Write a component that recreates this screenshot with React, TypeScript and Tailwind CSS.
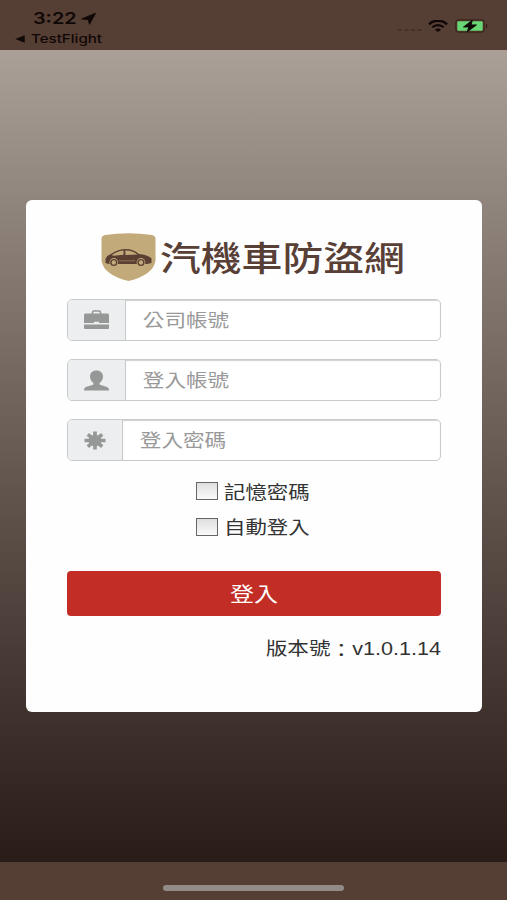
import type { ReactNode } from "react";

const cjk = "font-['Liberation_Sans','Noto_Sans_CJK_TC',sans-serif]";

function StatusBar() {
    return (
        <header className="flex justify-between h-[50px] bg-[#553e33] text-[#100806] font-['Inter',sans-serif]">
            <div className="pt-[9px] pl-[15px]">
                <div className="flex items-center h-[19px] pl-[18px]">
                    <span className="w-[48px] text-[16px] leading-[19px] font-semibold whitespace-nowrap origin-left scale-x-[1.24]">3:22</span>
                    <svg className="w-[15px] h-[12px]" viewBox="0 0 15 12" preserveAspectRatio="none">
                        <path d="M14.500 0.300 L8.500 11.300 L7.300 6.600 L0.700 5.900 Z" fill="currentColor" stroke="currentColor" strokeWidth="0.900" />
                    </svg>
                </div>
                <div className="flex items-center h-[21px]">
                    <svg className="w-[10px] h-[8px] mr-[6px]" viewBox="0 0 10 8">
                        <path d="M0.300 4 L9.700 0.200 V7.800 Z" fill="currentColor" />
                    </svg>
                    <span className="text-[12px] leading-[21px] font-medium whitespace-nowrap origin-left scale-x-[1.26]">TestFlight</span>
                </div>
            </div>

            {/* signal, wifi, battery */}
            <div className="flex items-center h-[20px] mt-[16px] pr-[18px]">
                <svg className="w-[25px] h-[4px] mt-[8px] mr-[6px]" viewBox="0 0 25 4">
                    <path d="M1 2h4M7.500 2h4M14 2h4M20.500 2h4" stroke="#3b2a22" strokeWidth="1.800" opacity="0.6" />
                </svg>
                <svg className="w-[20px] h-[12px] mr-[7px]" viewBox="0 0 20 12">
                    <path d="M1 4.300 C6 -0.500 14 -0.500 19 4.300" fill="none" stroke="currentColor" strokeWidth="2.500" />
                    <path d="M4.300 7.300 C7.500 4.300 12.500 4.300 15.700 7.300" fill="none" stroke="currentColor" strokeWidth="2.200" />
                    <path d="M7 9.700 C8.800 8.200 11.200 8.200 13 9.700 L10 12 Z" fill="currentColor" />
                </svg>
                <svg className="w-[34px] h-[14px]" viewBox="0 0 34 14">
                    <rect x="0.800" y="0.800" width="28.400" height="12.400" rx="3" fill="none" stroke="#3a261d" strokeWidth="1.200" />
                    <rect x="2.300" y="2.200" width="25.400" height="9.600" rx="1" fill="#68d673" />
                    <path d="M31 4.500 Q33.500 7 31 9.500 Z" fill="#2f1c15" />
                    <path d="M17.300 1.200 L8.500 8 H13.800 L12.300 12.800 L21.500 5.900 H16.200 Z" fill="currentColor" stroke="currentColor" strokeWidth="0.900" />
                </svg>
            </div>
        </header>
    )
}

function Logo() {
    return (
        <div className="flex h-[48px] ml-[34px]">
            <svg className="w-[55px] h-[48px] shrink-0" viewBox="0 0 55 48">
                <path d="M0.500 5 Q1 2.500 4 2 Q27 -1.500 51 2 Q54 2.500 54.500 5 V28 Q52 42 27.500 48 Q3 42 0.500 28 Z" fill="#c3aa7a" />
                {/* car */}
                <path d="M4.500 30 V26 Q5.500 22.500 10 21 Q17 16 25 16 Q32 16 38 21 Q48 22 50.500 25.500 V30 L46 31 H8 Z" fill="#594033" />
                <path d="M11 22 Q16 18.300 22.500 17.600 V21.800 L12 22.800 Z M24.300 17.500 Q31 17.200 36.500 21.500 L24.500 22 Z" fill="#c3aa7a" />
                <path d="M18 27.800 H34" stroke="#9c805d" strokeWidth="0.800" />
                <circle cx="12.800" cy="29.500" r="4.400" fill="#c3aa7a" />
                <circle cx="12.800" cy="29.500" r="2.900" fill="none" stroke="#594033" strokeWidth="1.400" />
                <circle cx="40" cy="29.500" r="4.400" fill="#c3aa7a" />
                <circle cx="40" cy="29.500" r="2.900" fill="none" stroke="#594033" strokeWidth="1.400" />
            </svg>
            <h1 className="ml-[4px] text-[34px] leading-[48px] font-medium text-[#594036] whitespace-nowrap origin-left scale-x-[1.2] font-['Noto_Sans_CJK_TC',sans-serif]">汽機車防盜網</h1>
        </div>
    )
}

function BriefcaseIcon() {
    return (
        <svg className="w-[25px] h-[20px]" viewBox="0 0 25 20">
            <path d="M8.500 4 V2.500 Q8.500 1 10 1 H15 Q16.500 1 16.500 2.500 V4" fill="none" stroke="#969797" strokeWidth="1.600" />
            <path d="M1.500 3.500 H23.500 Q25 3.500 25 5 V13 H15 V11.800 H10 V13 H0 V5 Q0 3.500 1.500 3.500 Z M0 14.500 H25 V18 Q25 19 24 19 H1 Q0 19 0 18 Z" fill="#969797" />
        </svg>
    )
}

function UserIcon() {
    return (
        <svg className="w-[25px] h-[21px]" viewBox="0 0 25 21">
            <path d="M12.500 0.500 C8.500 0.500 6 3 6 6.500 C6 9 7.300 11.500 9.400 12.900 V14.500 C6.500 15.800 2 16.600 0.600 18 Q0 18.700 0 20.500 H25 Q25 18.700 24.400 18 C23 16.600 18.500 15.800 15.600 14.500 V12.900 C17.700 11.500 19 9 19 6.500 C19 3 16.500 0.500 12.500 0.500 Z" fill="#969797" />
        </svg>
    )
}

function AsteriskIcon() {
    return (
        <svg className="w-[22px] h-[19px]" viewBox="0 0 22 19">
            <path d="M11 0.500 V18.500 M0.500 9.500 H21.500 M3.800 3.300 L18.200 15.700 M18.200 3.300 L3.800 15.700" stroke="#969797" strokeWidth="3.700" />
            <ellipse cx="11" cy="9.500" rx="6.500" ry="5.700" fill="#969797" />
        </svg>
    )
}

type FieldProps = {
    icon: ReactNode;
    label: string;
    type?: string;
    addonWidth?: string;
}

function Field({ icon, label, type = "text", addonWidth = "w-[58px]" }: FieldProps) {
    return (
        <div className="flex h-[42.500px] rounded-[5px] border border-[#c8cbcc] overflow-hidden bg-white">
            <div className={"flex shrink-0 items-center justify-center pt-px bg-[#eceeef] border-r border-[#c8cbcc] " + addonWidth}>
                {icon}
            </div>
            <div className="flex-1 overflow-hidden shadow-[inset_0_1px_1px_#d0d0d0]">
                <input
                    type={type}
                    placeholder={label}
                    className={"block w-[250px] h-full pl-[14px] pt-[3px] text-[18px] origin-left scale-x-[1.2] outline-none bg-transparent placeholder:text-[#999] " + cjk}
                />
            </div>
        </div>
    )
}

function CheckRow({ label }: { label: string }) {
    return (
        <label className="flex items-center h-[35.500px] ml-[129px]">
            <input type="checkbox" className="appearance-none w-[22px] h-[18px] border border-[#666] bg-linear-to-b from-[#dedede] to-[#fafafa]" />
            <span className="ml-[6px] pt-[3px] text-[18px] leading-none text-[#333] whitespace-nowrap origin-left scale-x-[1.19]">{label}</span>
        </label>
    )
}

function App() {
    return (
        <div className={"flex flex-col w-[507px] h-[900px] overflow-hidden " + cjk}>
            <StatusBar />

            <main className="flex-1 pt-[150px] pl-[26px] bg-linear-to-b from-[#aaa098] to-[#2a1d18]">
                <div className="w-[456px] h-[512px] pt-[33px] px-[41px] rounded-[6px] bg-[#fefefe]">
                    <Logo />

                    <div className="flex flex-col gap-[17.500px] mt-[17.500px]">
                        <Field icon={<BriefcaseIcon />} label="公司帳號" />
                        <Field icon={<UserIcon />} label="登入帳號" />
                        <Field icon={<AsteriskIcon />} label="登入密碼" type="password" addonWidth="w-[55px]" />
                    </div>

                    <div className="mt-[12.500px]">
                        <CheckRow label="記憶密碼" />
                        <CheckRow label="自動登入" />
                    </div>

                    <button className="block w-full h-[45px] mt-[26.500px] rounded-[4px] bg-[#c22e26] text-white text-[20px]">
                        <span className="inline-block pt-[2px] scale-x-[1.2]">登入</span>
                    </button>

                    <p className="mt-[19px] text-right text-[18px] leading-[28px] text-[#333] whitespace-nowrap origin-right scale-x-[1.2]">
                        版本號<span className="inline-block translate-y-[2px]">：</span>v1.0.1.14
                    </p>
                </div>
            </main>

            {/* home indicator */}
            <footer className="flex justify-center h-[38px] pt-[23px] bg-[#553e33]">
                <div className="w-[181px] h-[6px] rounded-full bg-[#938b87]" />
            </footer>
        </div>
    )
}


export default App;
